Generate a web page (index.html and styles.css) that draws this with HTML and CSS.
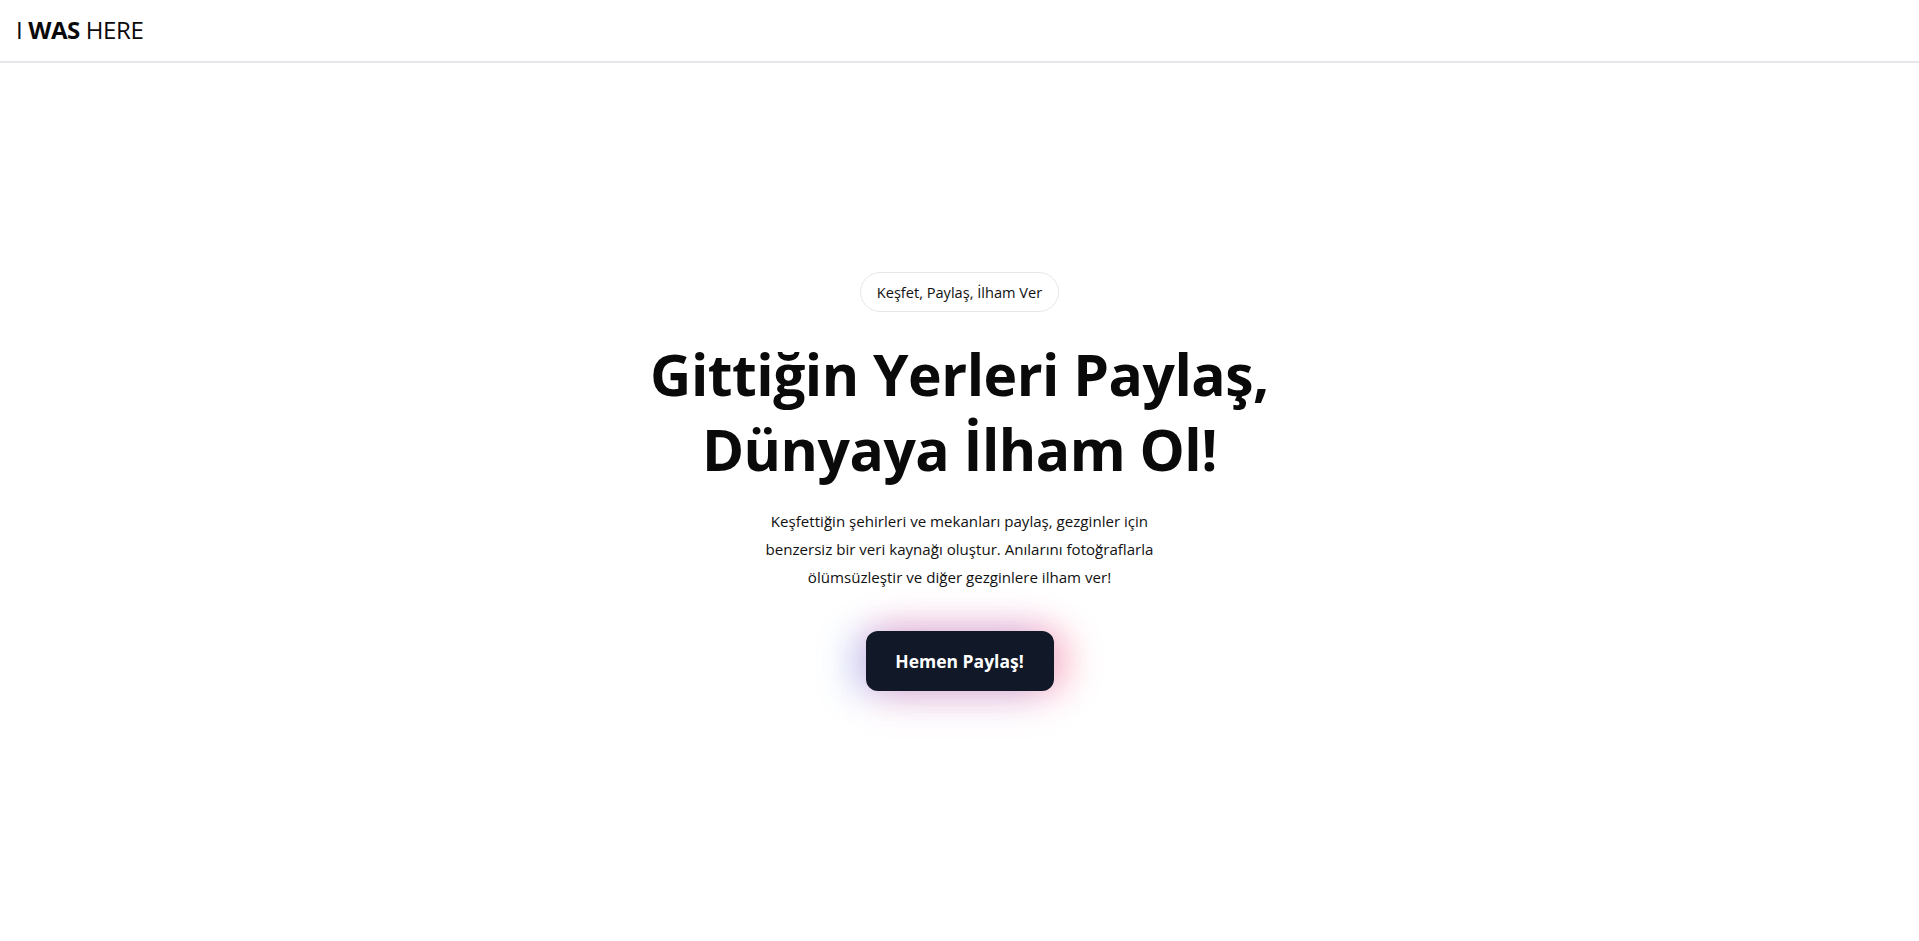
FILE: index.html
```html
<!DOCTYPE html>
<html lang="tr">
<head>
<meta charset="utf-8">
<title>I WAS HERE</title>
<link rel="stylesheet" href="styles.css">
</head>
<body>
<header class="topbar">
  <div class="logo">I <b>WAS</b> HERE</div>
</header>
<main class="hero">
  <span class="badge">Keşfet, Paylaş, İlham Ver</span>
  <h1 class="title">Gittiğin Yerleri Paylaş,<br>Dünyaya İlham Ol!</h1>
  <p class="lead">Keşfettiğin şehirleri ve mekanları paylaş, gezginler için benzersiz bir veri kaynağı oluştur. Anılarını fotoğraflarla ölümsüzleştir ve diğer gezginlere ilham ver!</p>
  <a class="cta" href="#">Hemen Paylaş!</a>
</main>
</body>
</html>
```
FILE: styles.css
```css
* { box-sizing: border-box; }
html, body { margin: 0; padding: 0; background: #fff; }
body {
  font-family: "Open Sans", "Noto Sans", "DejaVu Sans", sans-serif;
  color: #0a0a0a;
}
.topbar {
  height: 63px;
  border-bottom: 2px solid #e5e7eb;
  display: flex;
  align-items: center;
  padding: 0 16px;
}
.logo {
  font-size: 24px;
  letter-spacing: -0.4px;
  line-height: 1;
  margin-top: -1px;
}
.logo b { font-weight: 700; }
.hero {
  display: flex;
  flex-direction: column;
  align-items: center;
  text-align: center;
  padding-top: 209px;
  min-height: calc(100vh - 63px);
}
.badge {
  font-size: 14.6px;
  line-height: 20px;
  padding: 9px 16px;
  border: 1px solid #e5e7eb;
  border-radius: 9999px;
  color: #111;
}
.title {
  margin: 25px 0 0;
  font-size: 57px;
  line-height: 75px;
  font-weight: 700;
  letter-spacing: -0.5px;
}
.lead {
  margin: 20px 0 0;
  max-width: 420px;
  font-size: 15.1px;
  line-height: 28px;
  color: #111;
}
.cta {
  margin-top: 40px;
  display: inline-block;
  width: 188px;
  height: 60px;
  line-height: 60px;
  border-radius: 12px;
  background: #111827;
  color: #fff;
  text-decoration: none;
  font-weight: 700;
  font-size: 17.5px;
  box-shadow:
    -18px 2px 34px rgba(59, 130, 246, 0.22),
    0 -8px 34px rgba(236, 72, 153, 0.22),
    18px 0 34px rgba(244, 63, 94, 0.2),
    0 14px 40px rgba(236, 72, 153, 0.1);
}
```
